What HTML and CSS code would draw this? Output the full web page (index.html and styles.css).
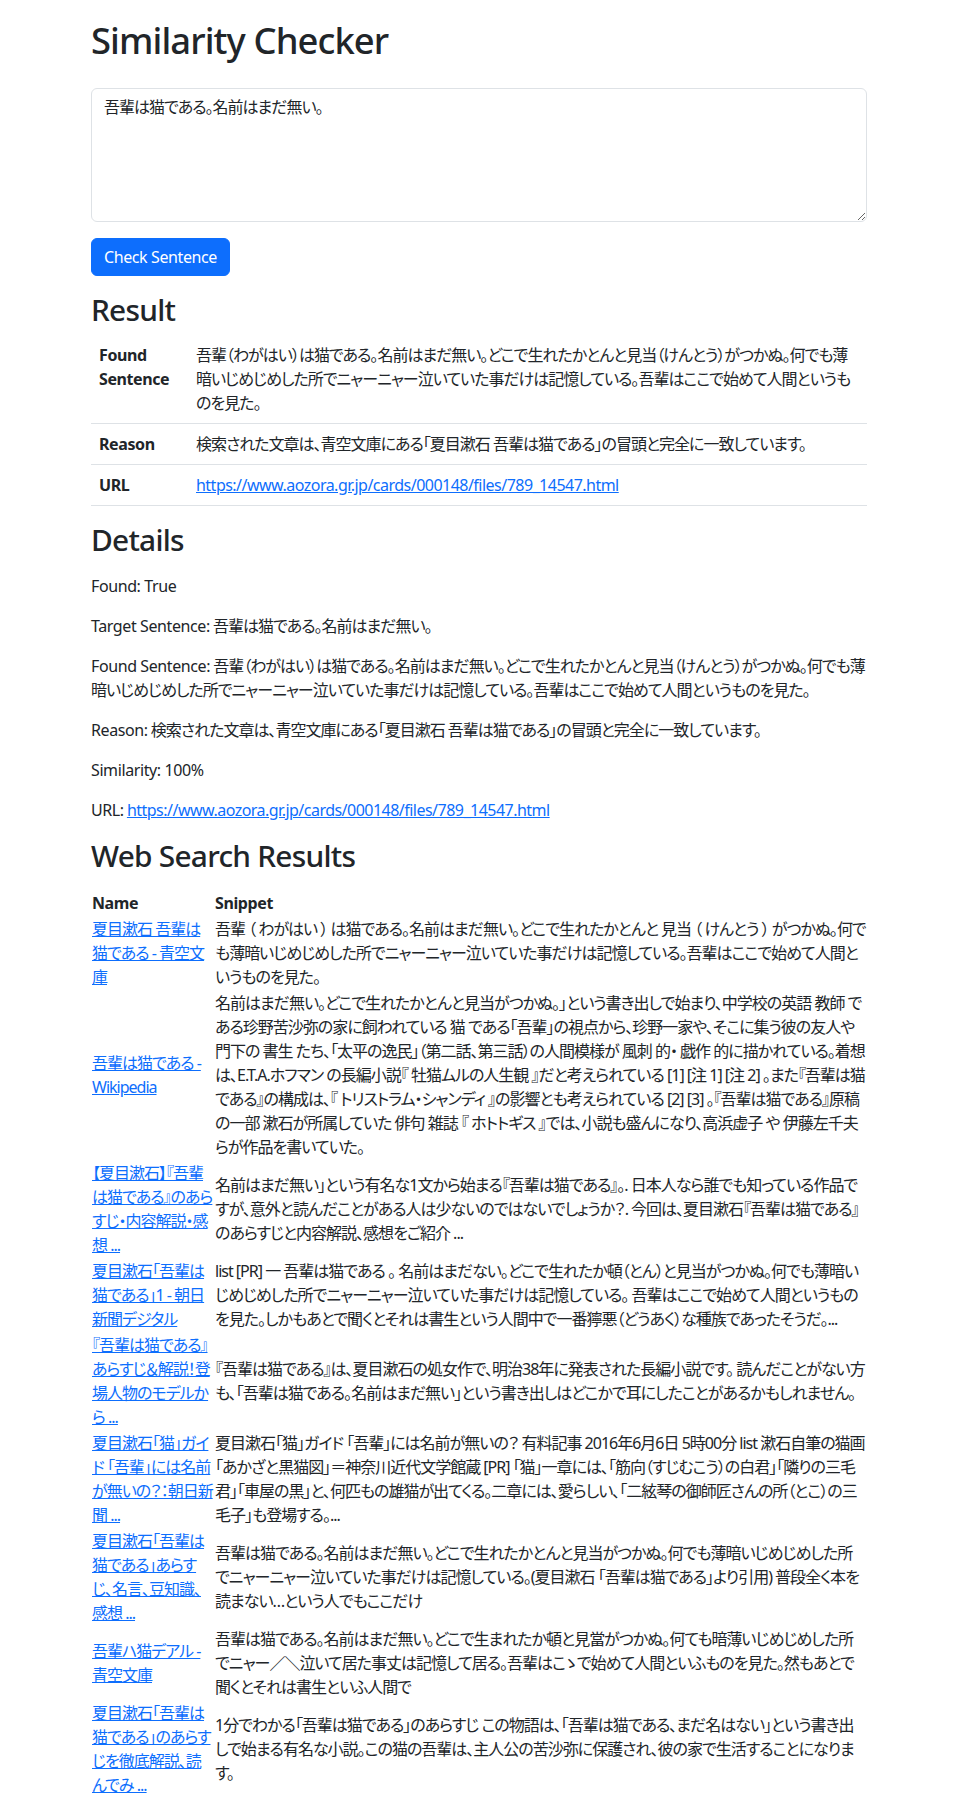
FILE: index.html
```html
<!DOCTYPE html>
<html lang="ja">
<head>
<meta charset="utf-8">
<title>Similarity Checker</title>
<link rel="stylesheet" href="styles.css">
</head>
<body>
<div class="container">
  <h1 class="page-title">Similarity Checker</h1>
  <form class="check-form">
    <textarea class="sentence-input" rows="5">吾輩は猫である。名前はまだ無い。</textarea>
    <button type="button" class="btn-primary">Check Sentence</button>
  </form>

  <h2 class="section-title result-title">Result</h2>
  <table class="result-table">
    <tbody>
      <tr>
        <th class="label-col">Found Sentence</th>
        <td>吾輩（わがはい）は猫である。名前はまだ無い。どこで生れたかとんと見当（けんとう）がつかぬ。何でも薄暗いじめじめした所でニャーニャー泣いていた事だけは記憶している。吾輩はここで始めて人間というものを見た。</td>
      </tr>
      <tr>
        <th>Reason</th>
        <td>検索された文章は、青空文庫にある「夏目漱石 吾輩は猫である」の冒頭と完全に一致しています。</td>
      </tr>
      <tr>
        <th>URL</th>
        <td><a class="url" href="#">https://www.aozora.gr.jp/cards/000148/files/789_14547.html</a></td>
      </tr>
    </tbody>
  </table>

  <h2 class="section-title">Details</h2>
  <div class="details">
    <p class="latin-line">Found: True</p>
    <p><span class="key">Target Sentence:</span> 吾輩は猫である。名前はまだ無い。</p>
    <p><span class="key">Found Sentence:</span> 吾輩（わがはい）は猫である。名前はまだ無い。どこで生れたかとんと見当（けんとう）がつかぬ。何でも薄暗いじめじめした所でニャーニャー泣いていた事だけは記憶している。吾輩はここで始めて人間というものを見た。</p>
    <p><span class="key">Reason:</span> 検索された文章は、青空文庫にある「夏目漱石 吾輩は猫である」の冒頭と完全に一致しています。</p>
    <p class="latin-line">Similarity: 100%</p>
    <p><span class="key">URL:</span> <a class="url" href="#">https://www.aozora.gr.jp/cards/000148/files/789_14547.html</a></p>
  </div>

  <h2 class="section-title">Web Search Results</h2>
  <table class="web-table">
    <thead>
      <tr>
        <th class="name-col">Name</th>
        <th>Snippet</th>
      </tr>
    </thead>
    <tbody>
      <tr>
        <td><a href="#">夏目漱石 吾輩は猫である - 青空文庫</a></td>
        <td>吾輩 （ わがはい ） は猫である。名前はまだ無い。どこで生れたかとんと 見当 （ けんとう ） がつかぬ。何でも薄暗いじめじめした所でニャーニャー泣いていた事だけは記憶している。吾輩はここで始めて人間というものを見た。</td>
      </tr>
      <tr>
        <td><a href="#">吾輩は猫である - Wikipedia</a></td>
        <td>名前はまだ無い。どこで生れたかとんと見当がつかぬ。」という書き出しで始まり、中学校の英語 教師 である珍野苦沙弥の家に飼われている 猫 である「吾輩」の視点から、珍野一家や、そこに集う彼の友人や 門下の 書生 たち、「太平の逸民」（第二話、第三話）の人間模様が 風刺 的・ 戯作 的に描かれている。着想は、E.T.A.ホフマン の長編小説『 牡猫ムルの人生観 』だと考えられている [1] [注 1] [注 2] 。また『吾輩は猫である』の構成は、『 トリストラム・シャンディ 』の影響とも考えられている [2] [3] 。『吾輩は猫である』原稿の一部 漱石が所属していた 俳句 雑誌 『 ホトトギス 』では、小説も盛んになり、高浜虚子 や 伊藤左千夫 らが作品を書いていた。</td>
      </tr>
      <tr>
        <td><a href="#">【夏目漱石】『吾輩は猫である』のあらすじ・内容解説・感想 ...</a></td>
        <td>名前はまだ無い」という有名な1文から始まる『吾輩は猫である』。. 日本人なら誰でも知っている作品ですが、意外と読んだことがある人は少ないのではないでしょうか？. 今回は、夏目漱石『吾輩は猫である』のあらすじと内容解説、感想をご紹介 ...</td>
      </tr>
      <tr>
        <td><a href="#">夏目漱石「吾輩は猫である」1 - 朝日新聞デジタル</a></td>
        <td>list [PR] 一 吾輩は猫である 。 名前はまだない。どこで生れたか頓（とん）と見当がつかぬ。何でも薄暗いじめじめした所でニャーニャー泣いていた事だけは記憶している。 吾輩はここで始めて人間というものを見た。しかもあとで聞くとそれは書生という人間中で一番獰悪（どうあく）な種族であったそうだ。...</td>
      </tr>
      <tr>
        <td><a href="#">『吾輩は猫である』あらすじ＆解説！登場人物のモデルから ...</a></td>
        <td>『吾輩は猫である』は、夏目漱石の処女作で、明治38年に発表された長編小説です。 読んだことがない方も、「吾輩は猫である。名前はまだ無い」という書き出しはどこかで耳にしたことがあるかもしれません。</td>
      </tr>
      <tr>
        <td><a href="#">夏目漱石「猫」ガイド 「吾輩」には名前が無いの？：朝日新聞 ...</a></td>
        <td>夏目漱石「猫」ガイド 「吾輩」には名前が無いの？ 有料記事 2016年6月6日 5時00分 list 漱石自筆の猫画「あかざと黒猫図」＝神奈川近代文学館蔵 [PR] 「猫」一章には、「筋向（すじむこう）の白君」「隣りの三毛君」「車屋の黒」と、何匹もの雄猫が出てくる。二章には、愛らしい、「二絃琴の御師匠さんの所（とこ）の三毛子」も登場する。...</td>
      </tr>
      <tr>
        <td><a href="#">夏目漱石「吾輩は猫である」あらすじ、名言、豆知識、感想 ...</a></td>
        <td>吾輩は猫である。名前はまだ無い。どこで生れたかとんと見当がつかぬ。何でも薄暗いじめじめした所でニャーニャー泣いていた事だけは記憶している。(夏目漱石 「吾輩は猫である」より引用) 普段全く本を読まない…という人でもここだけ</td>
      </tr>
      <tr>
        <td><a href="#">吾輩ハ猫デアル - 青空文庫</a></td>
        <td>吾輩は猫である。名前はまだ無い。どこで生まれたか頓と見當がつかぬ。何ても暗薄いじめじめした所でニャー／＼泣いて居た事丈は記憶して居る。吾輩はこゝで始めて人間といふものを見た。然もあとで聞くとそれは書生といふ人間で</td>
      </tr>
      <tr>
        <td><a href="#">夏目漱石「吾輩は猫である」のあらすじを徹底解説、読んでみ ...</a></td>
        <td>1分でわかる「吾輩は猫である」のあらすじ この物語は、「吾輩は猫である、まだ名はない」という書き出しで始まる有名な小説。この猫の吾輩は、主人公の苦沙弥に保護され、彼の家で生活することになります。</td>
      </tr>
    </tbody>
  </table>
</div>
</body>
</html>
```

FILE: styles.css
```css
html, body {
  margin: 0;
  padding: 0;
  background: #fff;
}

body {
  font-family: "Noto Sans", "Noto Sans CJK JP", sans-serif;
  font-size: 16px;
  line-height: 1.5;
  color: #212529;
  font-feature-settings: "palt";
  letter-spacing: -1px;
}

.container {
  max-width: 800px;
  margin: 0 auto;
  padding: 0 12px;
  box-sizing: border-box;
}

a {
  color: #0d6efd;
  text-decoration: underline;
}

.key,
.latin-line {
  letter-spacing: -0.4px;
}

.url {
  letter-spacing: -0.52px;
}

.page-title {
  font-size: calc(1.375rem + 1.5vw);
  font-weight: 500;
  line-height: 1.2;
  letter-spacing: -0.025em;
  margin: 19px 0 25px;
}

.check-form {
  margin: 0;
}

.sentence-input {
  display: block;
  width: 100%;
  height: 134px;
  box-sizing: border-box;
  padding: 6px 12px;
  font-family: inherit;
  font-size: 16px;
  line-height: 1.5;
  color: #212529;
  font-feature-settings: "palt";
  letter-spacing: -1px;
  border: 1px solid #dee2e6;
  border-radius: 6px;
  margin: 0 0 16px;
  resize: vertical;
}

.btn-primary {
  display: block;
  height: 38px;
  padding: 6px 12px;
  font-family: inherit;
  font-size: 16px;
  line-height: 24px;
  letter-spacing: -0.4px;
  color: #fff;
  background: #0d6efd;
  border: 1px solid #0d6efd;
  border-radius: 6px;
  margin: 0 0 16px;
  cursor: pointer;
}

.section-title {
  font-size: calc(1.325rem + .9vw);
  font-weight: 500;
  line-height: 1.2;
  letter-spacing: -0.025em;
  margin: 0 0 16px;
}

.section-title.result-title {
  margin-bottom: 8px;
}

.result-table {
  width: 100%;
  border-collapse: collapse;
  table-layout: fixed;
  margin: 0 0 16px;
}

.result-table th,
.result-table td {
  padding: 8px;
  border-bottom: 1px solid #dee2e6;
  vertical-align: top;
  text-align: left;
}

.result-table th {
  font-weight: 700;
  letter-spacing: -0.4px;
}

.result-table .label-col {
  width: 81px;
}

.details p {
  margin: 0 0 16px;
}

.web-table {
  width: 100%;
  border-collapse: collapse;
  table-layout: fixed;
  margin: 0;
}

.web-table th,
.web-table td {
  padding: 1px;
  vertical-align: middle;
  text-align: left;
}

.web-table th {
  font-weight: 700;
  letter-spacing: -0.4px;
}

.web-table .name-col {
  width: 121px;
}
```
